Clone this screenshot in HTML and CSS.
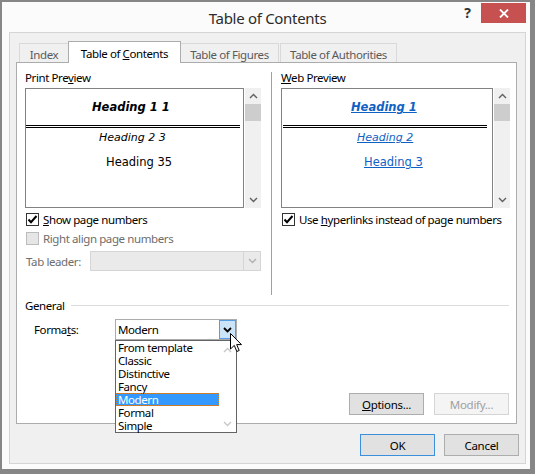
FILE: index.html
```html
<!DOCTYPE html>
<html>
<head>
<meta charset="utf-8">
<title>Table of Contents</title>
<link rel="stylesheet" href="styles.css">
</head>
<body>
<div class="window">
  <div class="titlebar">
    <div></div>
    <div class="title">Table of Contents</div>
    <div class="controls">
      <span class="help">?</span>
      <span class="close"><svg width="10" height="9" viewBox="0 0 10 9"><path d="M1 0.5 L9 8.5 M9 0.5 L1 8.5" stroke="#fff" stroke-width="1.8" fill="none"/></svg></span>
    </div>
  </div>
  <div class="panel">
    <div class="tabs">
      <div class="tab t-index">Index</div>
      <div class="tab active t-toc">Table of <u>C</u>ontents</div>
      <div class="tab t-fig">Table of Figures</div>
      <div class="tab t-auth">Table of Authorities</div>
    </div>
    <div class="pane">
      <div class="top">
        <div class="col col-left">
          <div class="label">Print Pre<u>v</u>iew</div>
          <div class="preview-row">
            <div class="preview print">
              <div class="h1 p1">Heading 1 1</div>
              <div class="dbl dbl-print"></div>
              <div class="h2 p2">Heading 2 3</div>
              <div class="h3 p3">Heading 35</div>
            </div>
            <div class="scrollbar">
              <span class="sb-arrow"><svg width="9" height="6" viewBox="0 0 9 6"><path d="M1 5 L4.5 1.5 L8 5" stroke="#606060" stroke-width="1.4" fill="none"/></svg></span>
              <span class="thumb"></span>
              <span class="sb-fill"></span>
              <span class="sb-arrow"><svg width="9" height="6" viewBox="0 0 9 6"><path d="M1 1 L4.5 4.5 L8 1" stroke="#606060" stroke-width="1.4" fill="none"/></svg></span>
            </div>
          </div>
          <div class="check row1">
            <span class="box"><svg width="11" height="11" viewBox="0 0 11 11"><path d="M1.5 5.5 L4 8.2 L9.5 2" stroke="#000" stroke-width="2" fill="none"/></svg></span>
            <span class="check-label"><u>S</u>how page numbers</span>
          </div>
          <div class="check row2 disabled">
            <span class="box"></span>
            <span class="check-label">Right align page numbers</span>
          </div>
          <div class="leader">
            <span class="leader-label">Tab leader:</span>
            <span class="combo disabled-combo">
              <span class="combo-text"></span>
              <span class="combo-btn"><svg width="9" height="6" viewBox="0 0 9 6"><path d="M1 1 L4.5 4.5 L8 1" stroke="#b0b0b0" stroke-width="1.4" fill="none"/></svg></span>
            </span>
          </div>
        </div>
        <div class="sep"></div>
        <div class="col col-right">
          <div class="label"><u>W</u>eb Preview</div>
          <div class="preview-row">
            <div class="preview web">
              <div class="h1 w1"><span class="link">Heading 1</span></div>
              <div class="dbl dbl-web"></div>
              <div class="h2 w2"><span class="link">Heading 2</span></div>
              <div class="h3 w3"><span class="link">Heading 3</span></div>
            </div>
            <div class="scrollbar">
              <span class="sb-arrow"><svg width="9" height="6" viewBox="0 0 9 6"><path d="M1 5 L4.5 1.5 L8 5" stroke="#606060" stroke-width="1.4" fill="none"/></svg></span>
              <span class="thumb"></span>
              <span class="sb-fill"></span>
              <span class="sb-arrow"><svg width="9" height="6" viewBox="0 0 9 6"><path d="M1 1 L4.5 4.5 L8 1" stroke="#606060" stroke-width="1.4" fill="none"/></svg></span>
            </div>
          </div>
          <div class="check row1">
            <span class="box"><svg width="11" height="11" viewBox="0 0 11 11"><path d="M1.5 5.5 L4 8.2 L9.5 2" stroke="#000" stroke-width="2" fill="none"/></svg></span>
            <span class="check-label">Use <u>h</u>yperlinks instead of page numbers</span>
          </div>
        </div>
      </div>
      <div class="general">
        <span>General</span>
        <span class="rule"></span>
      </div>
      <div class="formats">
        <span class="formats-label">Forma<u>t</u>s:</span>
        <div class="combo-wrap">
          <span class="combo open-combo">
            <span class="combo-text">Modern</span>
            <span class="combo-btn hot"><svg width="9" height="6" viewBox="0 0 9 6"><path d="M1 1 L4.5 4.5 L8 1" stroke="#000" stroke-width="1.8" fill="none"/></svg></span>
          </span>
          <div class="dropdown">
            <div class="items">
              <div class="item">From template</div>
              <div class="item">Classic</div>
              <div class="item">Distinctive</div>
              <div class="item">Fancy</div>
              <div class="item selected">Modern</div>
              <div class="item">Formal</div>
              <div class="item">Simple</div>
            </div>
            <div class="list-sb">
              <svg width="9" height="6" viewBox="0 0 9 6"><path d="M1 5 L4.5 1.5 L8 5" stroke="#c8c8c8" stroke-width="1.4" fill="none"/></svg>
              <svg width="9" height="6" viewBox="0 0 9 6"><path d="M1 1 L4.5 4.5 L8 1" stroke="#c8c8c8" stroke-width="1.4" fill="none"/></svg>
            </div>
          </div>
          <svg class="cursor" width="13" height="20" viewBox="0 0 13 20"><path d="M0.5 0.5 L0.5 16 L4.3 12.4 L6.8 18.5 L9.2 17.5 L6.7 11.6 L11.5 11.6 Z" fill="#fff" stroke="#000" stroke-width="1" stroke-linejoin="miter"/></svg>
        </div>
      </div>
      <div class="btnrow">
        <button class="btn"><u>O</u>ptions...</button>
        <button class="btn disabled-btn">Modify...</button>
      </div>
    </div>
    <div class="footer">
      <button class="btn default">OK</button>
      <button class="btn">Cancel</button>
    </div>
  </div>
</div>
</body>
</html>
```

FILE: styles.css
```css
* { box-sizing: border-box; }
html, body { margin: 0; }
body {
  width: 535px;
  height: 474px;
  background: #868686;
  padding: 2px 5px 5px 2px;
  font-family: "Noto Sans", "Open Sans", sans-serif;
  font-size: 11.5px;
  letter-spacing: -0.4px;
  color: #000;
  overflow: hidden;
}
u { text-decoration: underline; text-underline-offset: 1px; }

.window {
  width: 528px;
  height: 467px;
  background: #fbfbfb;
  padding: 0 4px 5px 7px;
  display: flex;
  flex-direction: column;
}

.titlebar {
  height: 30px;
  display: grid;
  grid-template-columns: 1fr auto 1fr;
  align-items: start;
}
.title {
  font-size: 15px;
  line-height: 20px;
  padding-top: 6px;
  color: #2b2b2b;
  letter-spacing: -0.3px;
}
.controls {
  justify-self: end;
  display: flex;
  align-items: flex-start;
}
.help {
  width: 17px;
  margin-top: 1px;
  margin-right: 5px;
  line-height: 20px;
  text-align: center;
  font-size: 14px;
  font-weight: bold;
  color: #333;
  letter-spacing: 0;
}
.close {
  width: 45px;
  height: 20px;
  margin-top: 1px;
  background: #c75050;
  display: flex;
  align-items: center;
  justify-content: center;
}

.panel {
  flex: 1;
  border: 1px solid #d5d5d5;
  background: #f0f0f0;
  padding-top: 8px;
  display: flex;
  flex-direction: column;
}

.tabs {
  display: flex;
  align-items: flex-end;
  height: 21px;
  padding-left: 9px;
}
.tab {
  height: 19px;
  border: 1px solid #d9d9d9;
  border-bottom: none;
  background: #f0f0f0;
  color: #5a5a5a;
  text-align: center;
  line-height: 15px;
  padding-top: 3px;
  white-space: nowrap;
}
.t-index { width: 50px; }
.t-toc { width: 113px; margin-left: -1px; }
.t-fig { width: 99px; margin-left: -1px; }
.t-auth { width: 117px; margin-left: 1px; }
.tab.active {
  position: relative;
  z-index: 2;
  height: 22px;
  margin-bottom: -1px;
  background: #fff;
  border-color: #acacac;
  color: #000;
  padding-top: 4px;
}

.pane {
  height: 362px;
  margin: 0 8px 0 6px;
  border: 1px solid #acacac;
  background: #fff;
  padding: 7px 6px 8px 8px;
  display: flex;
  flex-direction: column;
}

.top {
  display: flex;
  height: 225px;
}
.col-left { width: 236px; }
.col-right { width: 229px; margin-left: 9px; }
.sep {
  width: 1px;
  margin-left: 10px;
  margin-top: 2px;
  background: #a0a0a0;
}
.label { line-height: 15px; height: 15px; white-space: nowrap; }

.preview-row {
  display: flex;
  height: 120px;
  margin-top: 3px;
}
.preview {
  border: 1px solid #828282;
  background: #fff;
  font-family: "DejaVu Sans", sans-serif;
  letter-spacing: 0;
  padding-top: 10px;
  white-space: nowrap;
}
.print { width: 219px; }
.web { width: 212px; }
.scrollbar {
  width: 16px;
  margin-left: 1px;
  background: #f0f0f0;
  display: flex;
  flex-direction: column;
}
.sb-arrow {
  height: 16px;
  display: flex;
  align-items: center;
  justify-content: center;
}
.thumb { height: 17px; background: #cdcdcd; }
.sb-fill { flex: 1; }

.h1 { font-weight: bold; font-style: italic; font-size: 11.5px; line-height: 16px; }
.h2 { font-style: italic; font-size: 11px; line-height: 16px; margin-top: 2px; }
.h3 { font-size: 11.5px; line-height: 16px; margin-top: 8px; }
.p1 { padding-left: 66px; }
.p2 { padding-left: 73px; }
.p3 { padding-left: 80px; }
.w1 { padding-left: 69px; }
.w2 { padding-left: 75px; }
.w3 { padding-left: 82px; }
.dbl { height: 3px; border-top: 3px double #000; margin-top: 10px; }
.dbl-print { margin-right: 3px; }
.dbl-web { margin-left: 1px; margin-right: 5px; }
.link { color: #0f62c4; text-decoration: underline; text-underline-offset: 1px; }

.check {
  display: flex;
  align-items: center;
  height: 18px;
  white-space: nowrap;
}
.row1 { margin-top: 2px; }
.row2 { margin-top: 1px; }
.box {
  flex: none;
  width: 13px;
  height: 13px;
  border: 1px solid #333;
  background: #fff;
  margin-left: 1px;
  margin-right: 4px;
  display: flex;
  align-items: center;
  justify-content: center;
}
.check.disabled { color: #6d6d6d; }
.check.disabled .box { border-color: #bcbcbc; background: #e6e6e6; }

.leader {
  display: flex;
  align-items: center;
  height: 20px;
  margin-top: 4px;
}
.leader-label { width: 65px; color: #6d6d6d; padding-left: 1px; white-space: nowrap; }
.combo {
  display: flex;
  height: 20px;
  border: 1px solid #acacac;
}
.disabled-combo {
  width: 171px;
  border-color: #d5d5d5;
  background: #eaeaea;
}
.combo-text { flex: 1; padding-left: 2px; line-height: 18px; }
.combo-btn {
  width: 17px;
  display: flex;
  align-items: center;
  justify-content: center;
}
.disabled-combo .combo-btn { border-left: 1px solid #d5d5d5; }

.general {
  display: flex;
  align-items: center;
  height: 15px;
  margin-top: 3px;
  margin-right: 1px;
}
.rule { flex: 1; height: 1px; background: #dcdcdc; margin-left: 6px; }

.formats {
  display: flex;
  align-items: center;
  margin-top: 6px;
  height: 21px;
}
.formats-label { width: 81px; padding-left: 9px; box-sizing: content-box; }
.combo-wrap { position: relative; }
.open-combo {
  width: 122px;
  height: 21px;
  background: #fff;
  border-color: #acacac;
}
.open-combo .combo-text { line-height: 19px; padding-left: 2px; }
.combo-btn.hot {
  background: #cce4f7;
  border: 1px solid #569de5;
}
.dropdown {
  position: absolute;
  left: 0;
  top: 21px;
  width: 122px;
  height: 93px;
  border: 1px solid #646464;
  background: #fff;
  display: flex;
  z-index: 3;
}
.items { flex: 1; }
.item {
  height: 13px;
  line-height: 13px;
  padding-left: 2px;
  white-space: nowrap;
}
.item.selected {
  background: #3399ff;
  color: #fff;
  outline: 1px dotted #d0802c;
  outline-offset: -1px;
}
.list-sb {
  width: 17px;
  display: flex;
  flex-direction: column;
  align-items: center;
  justify-content: space-between;
  padding: 6px 0 5px;
}
.cursor {
  position: absolute;
  left: 115px;
  top: 14px;
  z-index: 4;
}

.btnrow {
  margin-top: auto;
  display: flex;
  justify-content: flex-end;
  gap: 10px;
  padding-right: 1px;
}
.btn {
  width: 75px;
  height: 22px;
  border: 1px solid #adadad;
  background: #e1e1e1;
  font-family: "Noto Sans", "Open Sans", sans-serif;
  font-size: 11.5px;
  letter-spacing: -0.3px;
  color: #000;
  padding: 0;
  margin: 0;
}
.btn.disabled-btn {
  border-color: #d5d5d5;
  background: #f4f4f4;
  color: #a0a0a0;
}
.btn.default { border-color: #3c8fdc; }

.footer {
  display: flex;
  justify-content: flex-end;
  gap: 9px;
  margin-top: 10px;
  padding-right: 6px;
}
```
